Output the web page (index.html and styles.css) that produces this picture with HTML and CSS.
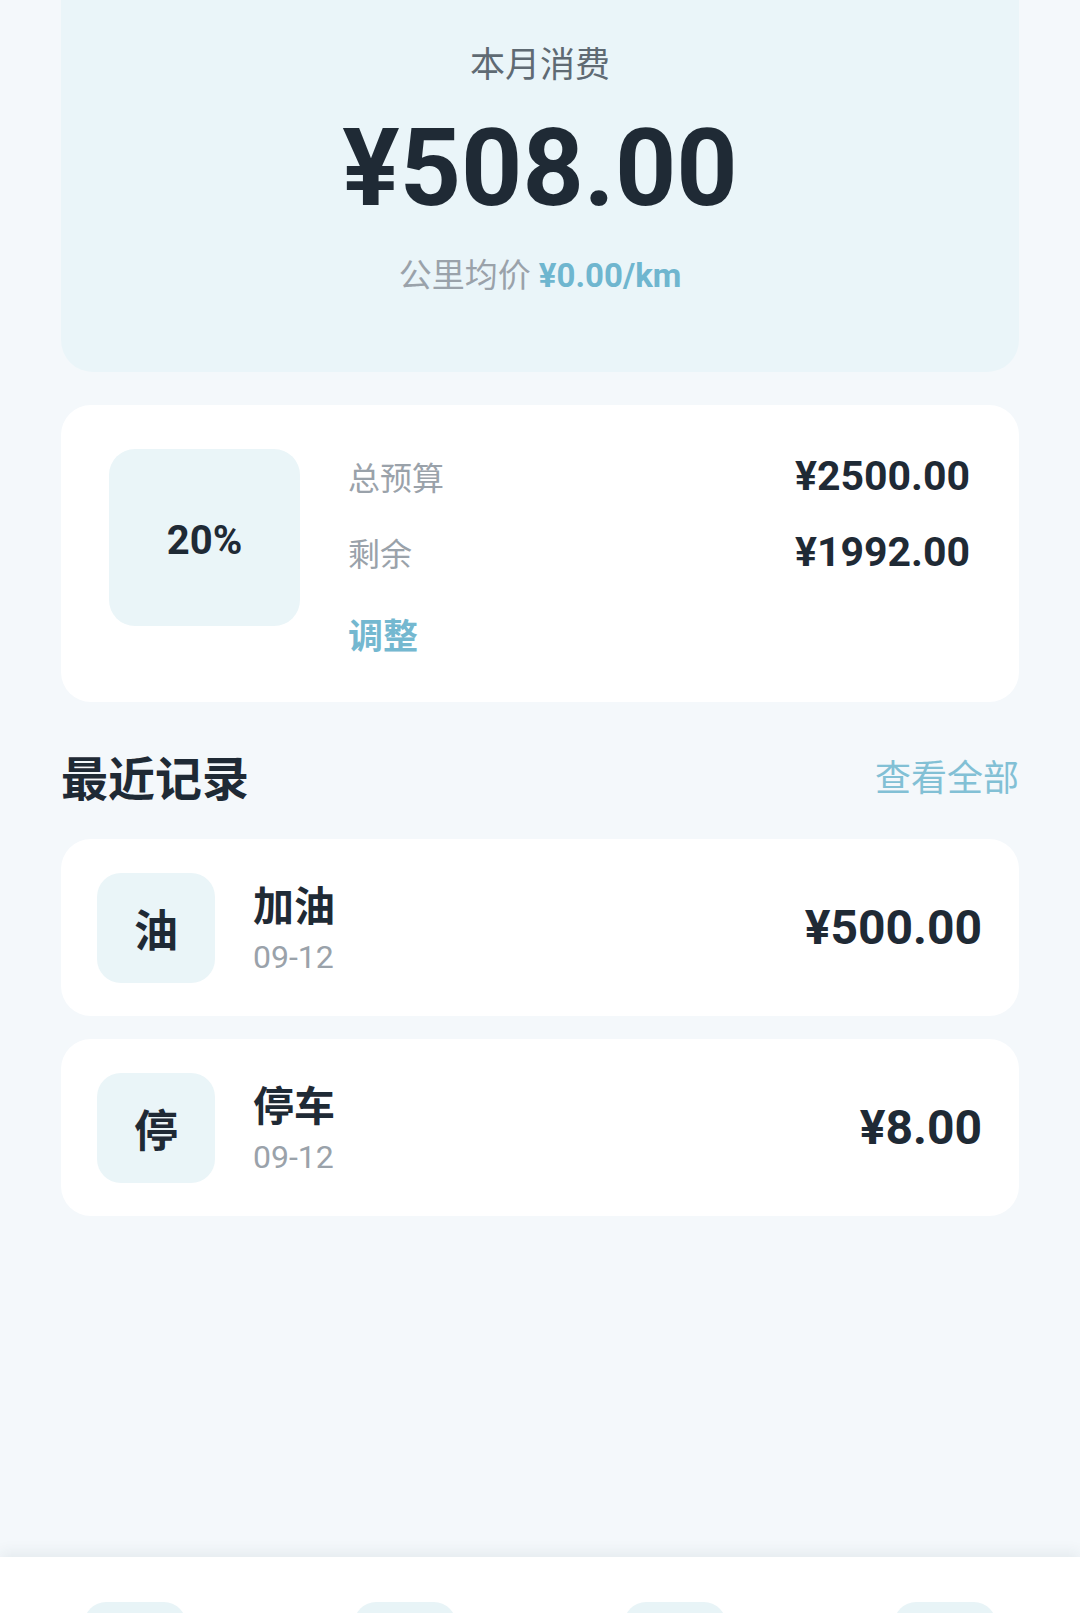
FILE: index.html
```html
<!DOCTYPE html>
<html lang="zh-CN">
<head>
  <meta charset="UTF-8">
  <meta name="viewport" content="width=device-width, initial-scale=1.0">
  <title>本月消费</title>
  <link rel="stylesheet" href="styles.css">
</head>
<body>
  <main class="page">
    <section class="hero">
      <div class="hero-label">本月消费</div>
      <div class="hero-amount">¥508.00</div>
      <div class="hero-sub">公里均价 <span class="hero-rate">¥0.00/km</span></div>
    </section>

    <section class="budget">
      <div class="budget-percent">20%</div>
      <div class="budget-info">
        <div class="budget-row">
          <span class="budget-label">总预算</span>
          <span class="budget-value">¥2500.00</span>
        </div>
        <div class="budget-row">
          <span class="budget-label">剩余</span>
          <span class="budget-value">¥1992.00</span>
        </div>
        <a class="budget-adjust">调整</a>
      </div>
    </section>

    <div class="section-head">
      <h2>最近记录</h2>
      <a class="see-all">查看全部</a>
    </div>

    <div class="records">
      <div class="record">
        <div class="record-icon">油</div>
        <div class="record-text">
          <div class="record-title">加油</div>
          <div class="record-date">09-12</div>
        </div>
        <div class="record-amount">¥500.00</div>
      </div>
      <div class="record">
        <div class="record-icon">停</div>
        <div class="record-text">
          <div class="record-title">停车</div>
          <div class="record-date">09-12</div>
        </div>
        <div class="record-amount">¥8.00</div>
      </div>
    </div>
  </main>

  <nav class="tabbar">
    <div class="tab"><span class="tab-icon"></span></div>
    <div class="tab"><span class="tab-icon"></span></div>
    <div class="tab"><span class="tab-icon"></span></div>
    <div class="tab"><span class="tab-icon"></span></div>
  </nav>
</body>
</html>
```

FILE: styles.css
```css
body {
  margin: 0;
  background-color: #f4f8fb;
  font-family: Roboto, "Noto Sans CJK SC", sans-serif;
  color: #1f2a35;
}
.page {
  height: 1557px;
  box-sizing: border-box;
  padding: 0 61px;
}
.hero {
  background-color: #eaf5f9;
  border-radius: 0 0 32px 32px;
  padding: 46px 0 76px;
  text-align: center;
}
.hero-label {
  font-size: 35px;
  line-height: 40px;
  color: #5f6a73;
}
.hero-amount {
  margin-top: 23px;
  font-size: 107px;
  line-height: 120px;
  font-weight: 700;
  color: #1f2a35;
}
.hero-sub {
  margin-top: 27px;
  font-size: 33px;
  line-height: 40px;
  color: #9aa2aa;
}
.hero-rate {
  font-weight: 700;
  color: #6fb6cf;
}
.budget {
  margin-top: 33px;
  background-color: #fff;
  border-radius: 30px;
  padding: 44px 49px 42px 48px;
  display: flex;
  align-items: flex-start;
  gap: 48px;
}
.budget-percent {
  width: 191px;
  height: 177px;
  padding-top: 6px;
  box-sizing: border-box;
  flex-shrink: 0;
  border-radius: 26px;
  background-color: #eaf5f8;
  display: flex;
  align-items: center;
  justify-content: center;
  font-size: 40px;
  font-weight: 700;
}
.budget-info {
  flex: 1;
  padding-top: 5px;
  display: flex;
  flex-direction: column;
}
.budget-row {
  display: flex;
  justify-content: space-between;
  align-items: center;
  height: 44px;
  margin-bottom: 32px;
}
.budget-row + .budget-row { margin-bottom: 42px; }
.budget-label {
  font-size: 32px;
  color: #9aa2aa;
}
.budget-value {
  font-size: 41px;
  font-weight: 700;
}
.budget-adjust {
  font-size: 35px;
  line-height: 44px;
  font-weight: 700;
  color: #74b8d0;
}
.section-head {
  margin-top: 45px;
  display: flex;
  justify-content: space-between;
  align-items: center;
  height: 56px;
}
.section-head h2 {
  margin: 0;
  font-size: 47px;
  font-weight: 700;
}
.see-all {
  font-size: 36px;
  color: #82c0d5;
}
.records {
  margin-top: 36px;
  display: flex;
  flex-direction: column;
  gap: 23px;
}
.record {
  height: 177px;
  box-sizing: border-box;
  background-color: #fff;
  border-radius: 30px;
  padding: 0 37px 0 36px;
  display: flex;
  align-items: center;
  gap: 38px;
}
.record-icon {
  width: 118px;
  height: 110px;
  flex-shrink: 0;
  border-radius: 24px;
  background-color: #eaf5f8;
  display: flex;
  align-items: center;
  justify-content: center;
  font-size: 44px;
  font-weight: 700;
}
.record-text {
  flex: 1;
  padding-top: 6px;
  display: flex;
  flex-direction: column;
  gap: 4px;
}
.record-title {
  font-size: 41px;
  line-height: 48px;
  font-weight: 700;
}
.record-date {
  font-size: 32px;
  line-height: 44px;
  color: #9aa2aa;
}
.record-amount {
  font-size: 48px;
  font-weight: 700;
}
.tabbar {
  background-color: #fff;
  box-shadow: 0 -4px 14px rgba(40, 60, 80, 0.08);
  display: grid;
  grid-template-columns: repeat(4, 1fr);
  height: 140px;
  position: relative;
}
.tab {
  display: flex;
  justify-content: center;
  padding-top: 45px;
}
.tab-icon {
  width: 102px;
  height: 80px;
  border-radius: 22px;
  background-color: #e8f4f7;
}
```
